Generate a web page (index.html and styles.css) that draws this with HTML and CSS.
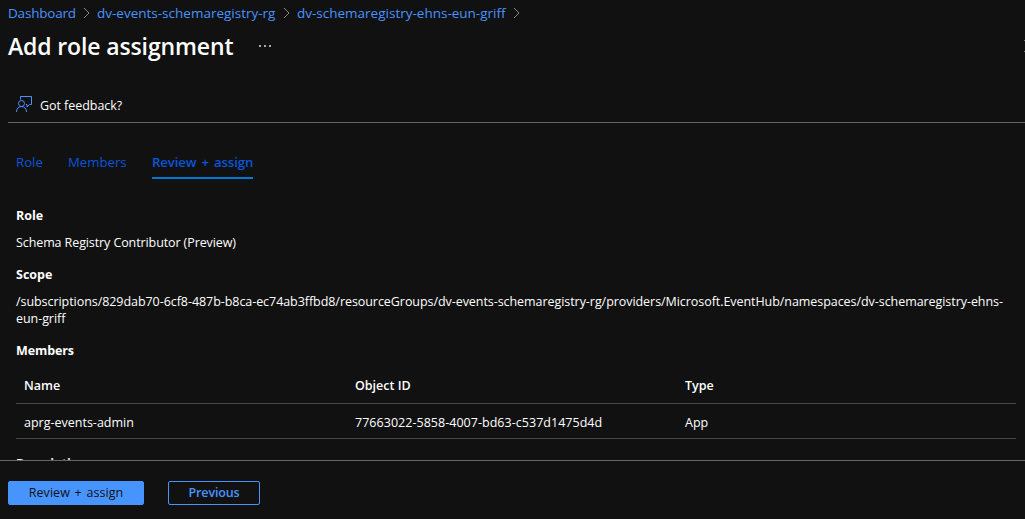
FILE: index.html
```html
<!DOCTYPE html>
<html lang="en">
<head>
<meta charset="utf-8">
<title>Add role assignment</title>
<link rel="stylesheet" href="styles.css">
</head>
<body>
<div class="blade">
  <nav class="breadcrumb">
    <a class="crumb crumb-home">Dashboard</a>
    <svg class="chevron" viewBox="0 0 7 12"><path d="M1 1l5 5-5 5"/></svg>
    <a class="crumb crumb-group">dv-events-schemaregistry-rg</a>
    <svg class="chevron" viewBox="0 0 7 12"><path d="M1 1l5 5-5 5"/></svg>
    <a class="crumb crumb-namespace">dv-schemaregistry-ehns-eun-griff</a>
    <svg class="chevron" viewBox="0 0 7 12"><path d="M1 1l5 5-5 5"/></svg>
  </nav>
  <header class="title-bar">
    <h1 class="title">Add role assignment</h1>
    <svg class="more" viewBox="0 0 12 2"><path d="M0 0h2v2H0zM5 0h2v2H5zM10 0h2v2h-2z"/></svg>
    <svg class="close" viewBox="0 0 12 12"><path d="M.5.5l11 11M11.5.5l-11 11"/></svg>
  </header>
  <div class="toolbar">
    <svg class="feedback-icon" viewBox="0 0 16 16"><path d="M4.500 3.500v-3h11v8h-2l-2.500 2.500v-2.500h-1"/><circle cx="5.500" cy="7.500" r="3"/><path d="M.5 16c0-3.300 2.200-5.500 5-5.500s5 2.200 5 5.500"/></svg>
    <span class="feedback">Got feedback?</span>
  </div>
  <div class="tabs">
    <a class="tab tab-role">Role</a>
    <a class="tab tab-members">Members</a>
    <a class="tab tab-review">Review + assign</a>
  </div>
  <main class="summary">
    <h2 class="label">Role</h2>
    <p class="value value-role">Schema Registry Contributor (Preview)</p>
    <h2 class="label">Scope</h2>
    <p class="value value-scope">/subscriptions/829dab70-6cf8-487b-b8ca-ec74ab3ffbd8/resourceGroups/dv-events-schemaregistry-rg/providers/Microsoft.EventHub/namespaces/dv-schemaregistry-ehns-<br>eun-griff</p>
    <h2 class="label label-members">Members</h2>
    <div class="grid">
      <div class="row head"><span>Name</span><span>Object ID</span><span>Type</span></div>
      <div class="row"><span class="member">aprg-events-admin</span><span class="object-id">77663022-5858-4007-bd63-c537d1475d4d</span><span>App</span></div>
    </div>
    <h2 class="label label-description">Description</h2>
  </main>
  <footer class="footer">
    <button class="button primary">Review + assign</button>
    <button class="button secondary">Previous</button>
  </footer>
</div>
</body>
</html>
```
FILE: styles.css
```css
* { box-sizing: border-box; }
body {
  margin: 0;
  background: #111;
  color: #fff;
  font: 12.5px/17px "Open Sans", "Noto Sans", sans-serif;
}
.blade { display: flex; flex-direction: column; height: 519px; overflow: hidden; }
svg { display: block; flex: none; fill: none; }
.breadcrumb { display: flex; align-items: center; height: 26px; padding-left: 8px; font-size: 13.5px; }
.crumb { color: #4894fe; white-space: nowrap; flex: none; }
.crumb-home { width: 67px; letter-spacing: -0.2px; }
.crumb-group { width: 178px; }
.crumb-namespace { width: 208px; }
.chevron { width: 7px; height: 12px; margin: 0 7px 0 8px; stroke: #8a8a8a; }
.title-bar { display: flex; align-items: center; height: 40px; padding-left: 8px; }
.title { margin: 0; width: 225px; font-size: 23px; line-height: 32px; font-weight: 600; letter-spacing: -0.13px; white-space: nowrap; }
.more { width: 12px; height: 2px; margin-left: 26px; fill: #aaa; }
.close { width: 12px; height: 12px; margin-left: auto; margin-right: -11px; stroke: #ddd; }
.toolbar { display: flex; align-items: center; height: 57px; margin-left: 8px; padding: 20px 0 0 8px; border-bottom: 1px solid #666; }
.feedback-icon { width: 16px; height: 16px; margin-right: 8px; stroke: #4894fe; }
.feedback { padding-top: 2px; letter-spacing: -0.05px; white-space: nowrap; }
.tabs { display: flex; gap: 25px; margin: 30px 0 0 16px; height: 26px; font-size: 13.2px; }
.tab { color: #0b55dc; height: 26px; padding-top: 1px; white-space: nowrap; }
.tab-role { width: 27px; }
.tab-members { width: 59px; }
.tab-review { width: 101px; font-weight: 600; letter-spacing: -0.1px; word-spacing: 1.7px; border-bottom: 2px solid #0078d4; }
.summary { flex: 1; min-height: 0; overflow: hidden; padding: 28px 9px 0 16px; }
.label { margin: 0; font-size: 12.5px; font-weight: 700; line-height: 17px; }
.value { margin: 10px 0 15px; white-space: nowrap; }
.value-role { letter-spacing: -0.1px; }
.value-scope { letter-spacing: -0.058px; }
.label-members { letter-spacing: -0.1px; }
.grid { margin-top: 9px; }
.row { display: grid; grid-template-columns: 331px 330px 1fr; align-items: center; height: 35px; padding: 2px 0 0 8px; border-bottom: 1px solid #444; }
.row.head { height: 36px; padding: 0 0 1px 8px; font-weight: 600; }
.object-id { letter-spacing: 0.03px; }
.label-description { margin-top: 16px; letter-spacing: -0.15px; }
.footer { flex: none; display: flex; gap: 24px; height: 59px; border-top: 1px solid #666; padding: 20px 8px 0; }
.button { height: 24px; padding: 0; border: 1px solid #4894fe; border-radius: 2px; font: 12.5px/20px "Open Sans", sans-serif; }
.primary { width: 136px; background: #4894fe; color: #111; letter-spacing: 0.05px; word-spacing: 1.4px; }
.secondary { width: 92px; background: #111; color: #4894fe; font-weight: 600; letter-spacing: -0.15px; }
```
